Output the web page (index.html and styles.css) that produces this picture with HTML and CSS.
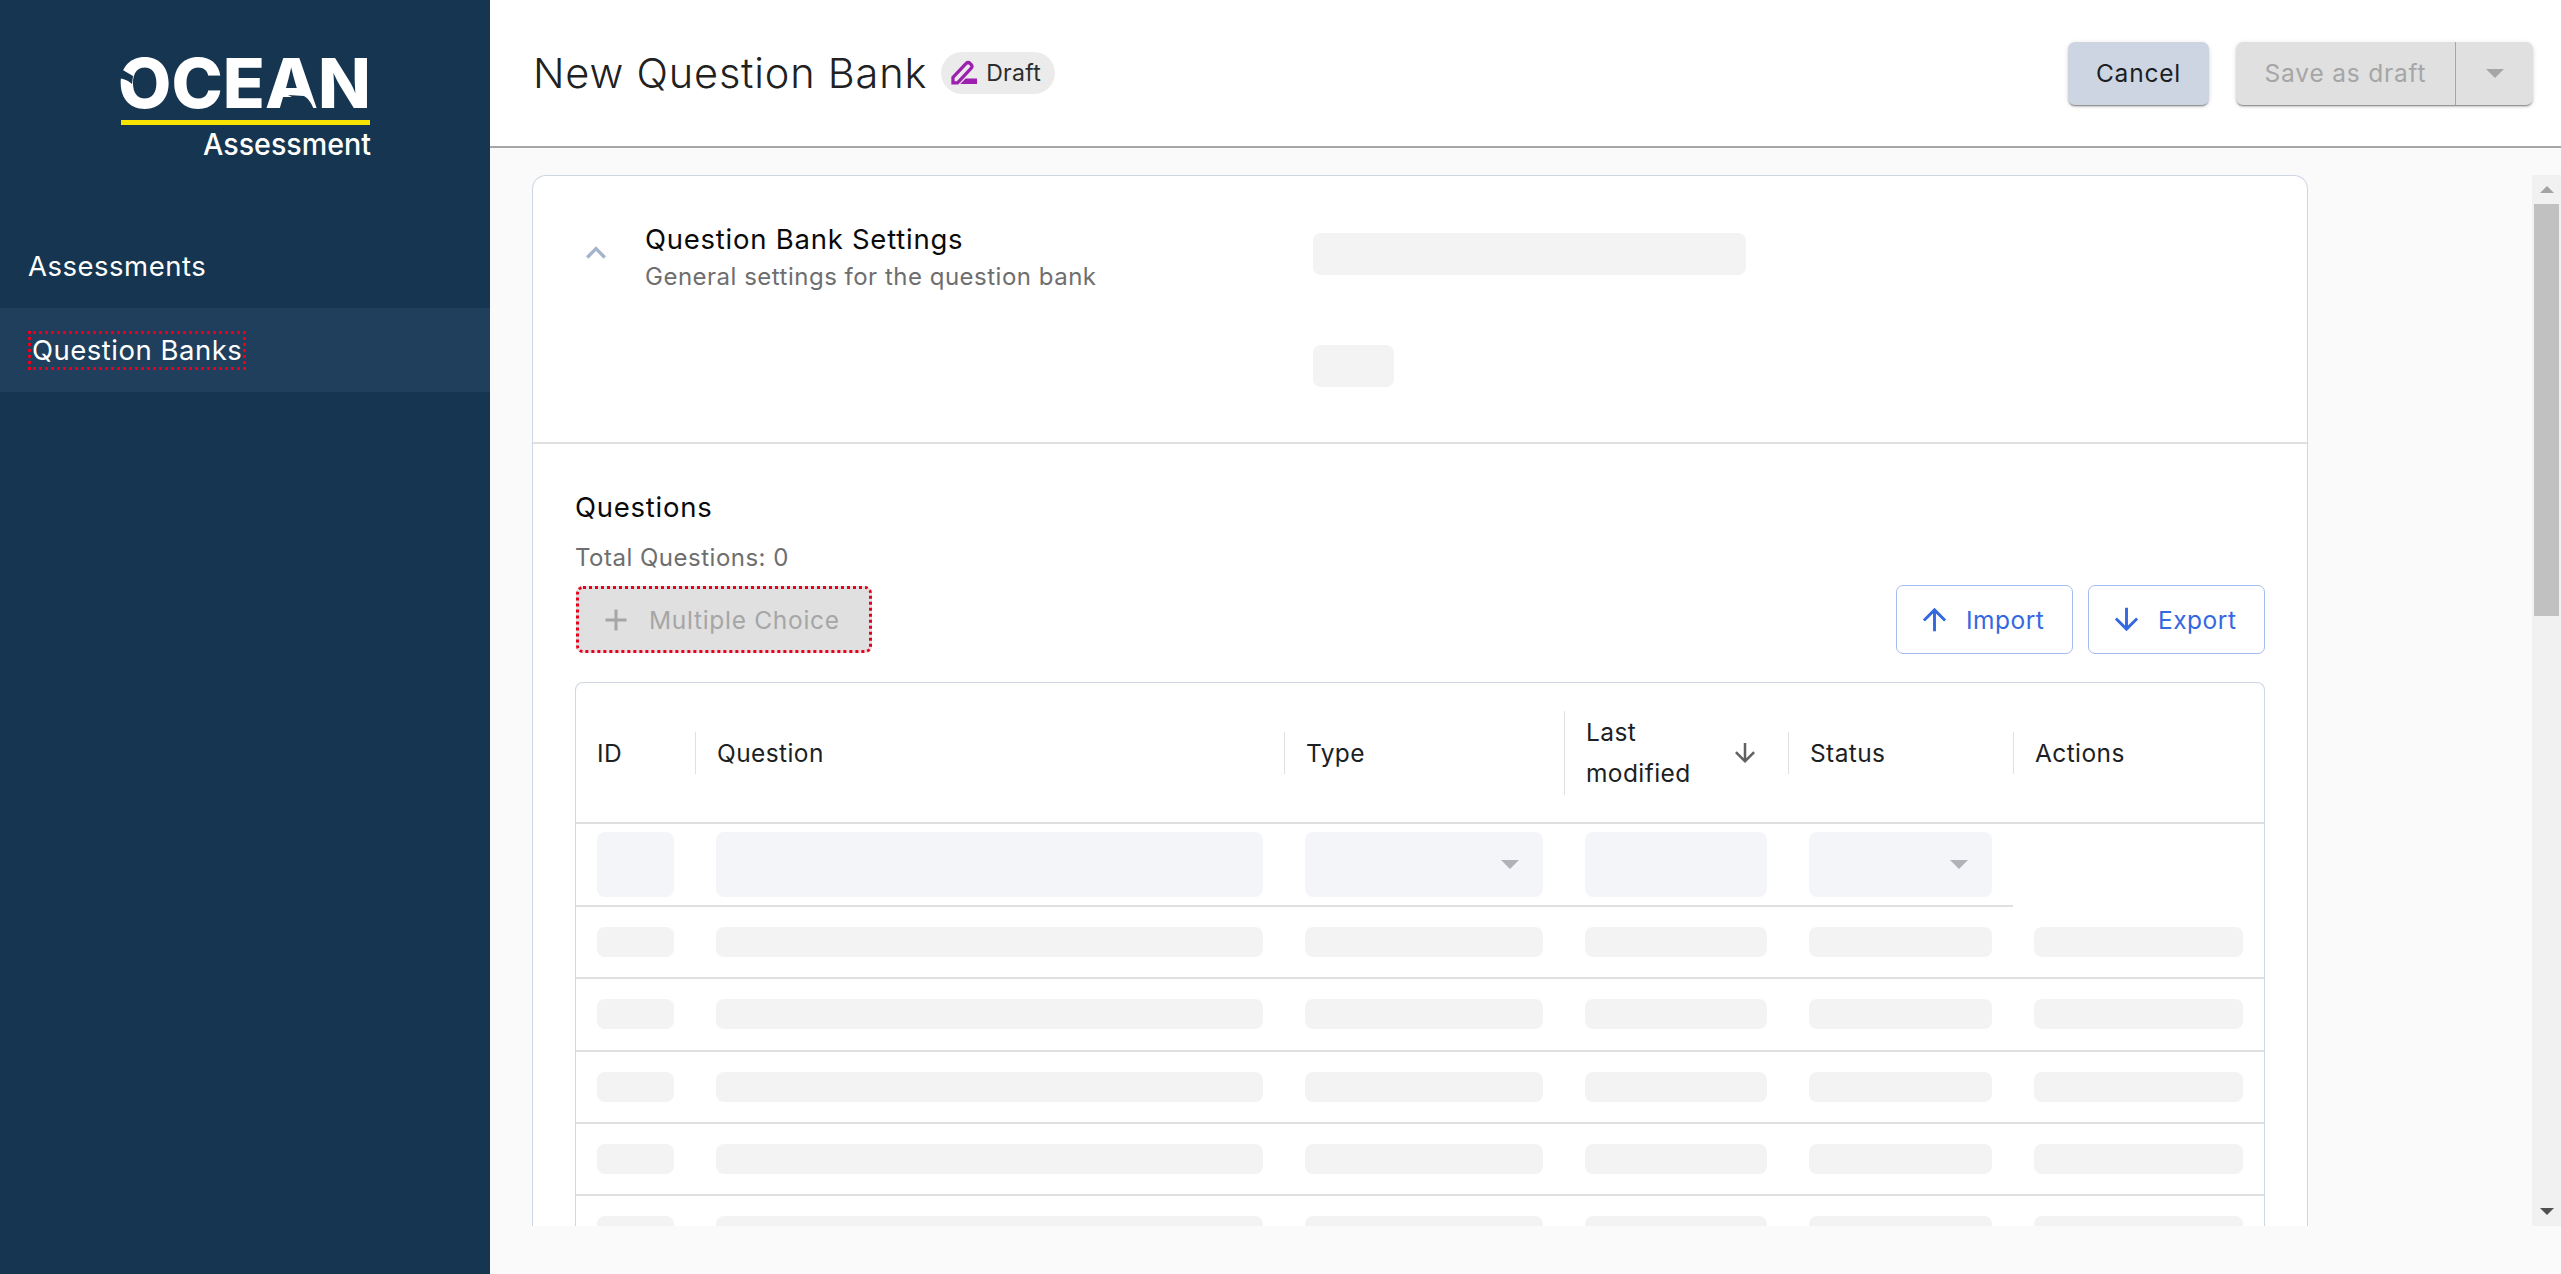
FILE: index.html
```html
<!DOCTYPE html>
<html lang="en">
<head>
  <meta charset="UTF-8">
  <meta name="viewport" content="width=device-width, initial-scale=1.0">
  <title>New Question Bank</title>
  <link rel="stylesheet" href="styles.css">
</head>
<body>
  <nav class="sidebar">
    <svg class="logo" viewBox="0 0 270 110" width="270" height="110">
      <text class="logo-word" x="0" y="56" textLength="253" lengthAdjust="spacingAndGlyphs">OCEAN</text>
      <path class="logo-cut" d="M-2 14 L15 24 L14 32 C10 28 5 27 -2 25 Z"/>
      <path class="logo-cut" d="M170 43 L186 44 C191 47 194 52 196 58 L184 58 L176 46 Z"/>
      <rect class="logo-bar" x="3" y="68" width="249" height="5"/>
      <text class="logo-sub" x="85" y="103" textLength="168" lengthAdjust="spacingAndGlyphs">Assessment</text>
    </svg>
    <a class="nav-item">Assessments</a>
    <a class="nav-item active"><span class="focus">Question Banks</span></a>
  </nav>

  <main class="main">
    <header class="topbar">
      <h1>New Question Bank</h1>
      <span class="chip">
        <svg viewBox="0 0 24 24" width="26" height="26">
          <path class="pen" d="M1.8 21 V16 L14 3.2 a2.6 2.6 0 0 1 3.6 0 l.9.9 a2.6 2.6 0 0 1 0 3.6 L6 21 Z"/>
          <path class="pen-base" d="M13.5 17 H25 V22.2 H8.5 Z"/>
        </svg>
        Draft
      </span>
      <div class="top-actions">
        <button class="btn btn-cancel">Cancel</button>
        <div class="split">
          <span class="split-main">Save as draft</span>
          <span class="split-arrow"><i class="caret"></i></span>
        </div>
      </div>
    </header>

    <div class="pane">
      <div class="scroller">
        <section class="card">
          <div class="settings">
            <svg class="chevron" viewBox="0 0 24 24" width="40" height="40"><path d="M12 8l-6 6 1.41 1.41L12 10.83l4.59 4.58L18 14z"/></svg>
            <div class="settings-text">
              <h2>Question Bank Settings</h2>
              <p>General settings for the question bank</p>
            </div>
            <div class="settings-fields">
              <div class="skel skel-name"></div>
              <div class="skel skel-small"></div>
            </div>
          </div>

          <div class="questions">
            <h3>Questions</h3>
            <p class="total">Total Questions: 0</p>
            <div class="toolbar">
              <button class="btn-add">
                <svg viewBox="0 0 24 24" width="36" height="36"><path d="M19 13h-6v6h-2v-6H5v-2h6V5h2v6h6v2z"/></svg>
                Multiple Choice
              </button>
              <div class="toolbar-right">
                <button class="btn-line">
                  <svg viewBox="0 0 24 24" width="35" height="35"><path d="M4 12l1.41 1.41L11 7.83V20h2V7.83l5.58 5.59L20 12l-8-8-8 8z"/></svg>
                  Import
                </button>
                <button class="btn-line">
                  <svg viewBox="0 0 24 24" width="35" height="35"><path d="M20 12l-1.41-1.41L13 16.17V4h-2v12.17l-5.58-5.59L4 12l8 8 8-8z"/></svg>
                  Export
                </button>
              </div>
            </div>

            <div class="table">
              <div class="row head">
                <div class="th"><span class="th-label first">ID</span></div>
                <div class="th"><span class="th-label">Question</span></div>
                <div class="th"><span class="th-label">Type</span></div>
                <div class="th"><span class="th-label tall">Last<br>modified
                  <svg class="sort" viewBox="0 0 24 24" width="30" height="30"><path d="M20 12l-1.41-1.41L13 16.17V4h-2v12.17l-5.58-5.59L4 12l8 8 8-8z"/></svg>
                </span></div>
                <div class="th"><span class="th-label">Status</span></div>
                <div class="th"><span class="th-label">Actions</span></div>
              </div>

              <div class="row filters">
                <div class="cell"><div class="filter"></div></div>
                <div class="cell"><div class="filter"></div></div>
                <div class="cell"><div class="filter"><i class="caret"></i></div></div>
                <div class="cell"><div class="filter"></div></div>
                <div class="cell"><div class="filter"><i class="caret"></i></div></div>
                <div class="cell empty"></div>
              </div>

              <div class="row body-row">
                <div class="cell"><div class="skel"></div></div>
                <div class="cell"><div class="skel"></div></div>
                <div class="cell"><div class="skel"></div></div>
                <div class="cell"><div class="skel"></div></div>
                <div class="cell"><div class="skel"></div></div>
                <div class="cell"><div class="skel"></div></div>
              </div>
              <div class="row body-row">
                <div class="cell"><div class="skel"></div></div>
                <div class="cell"><div class="skel"></div></div>
                <div class="cell"><div class="skel"></div></div>
                <div class="cell"><div class="skel"></div></div>
                <div class="cell"><div class="skel"></div></div>
                <div class="cell"><div class="skel"></div></div>
              </div>
              <div class="row body-row">
                <div class="cell"><div class="skel"></div></div>
                <div class="cell"><div class="skel"></div></div>
                <div class="cell"><div class="skel"></div></div>
                <div class="cell"><div class="skel"></div></div>
                <div class="cell"><div class="skel"></div></div>
                <div class="cell"><div class="skel"></div></div>
              </div>
              <div class="row body-row">
                <div class="cell"><div class="skel"></div></div>
                <div class="cell"><div class="skel"></div></div>
                <div class="cell"><div class="skel"></div></div>
                <div class="cell"><div class="skel"></div></div>
                <div class="cell"><div class="skel"></div></div>
                <div class="cell"><div class="skel"></div></div>
              </div>
              <div class="row body-row">
                <div class="cell"><div class="skel"></div></div>
                <div class="cell"><div class="skel"></div></div>
                <div class="cell"><div class="skel"></div></div>
                <div class="cell"><div class="skel"></div></div>
                <div class="cell"><div class="skel"></div></div>
                <div class="cell"><div class="skel"></div></div>
              </div>
            </div>
          </div>
        </section>
      </div>

      <div class="scrollbar">
        <div class="sb-btn"><i class="sb-up"></i></div>
        <div class="sb-thumb"></div>
        <div class="sb-track"></div>
        <div class="sb-btn"><i class="sb-down"></i></div>
      </div>
    </div>
  </main>
</body>
</html>
```

FILE: styles.css
```css
* {
  box-sizing: border-box;
}
html, body {
  height: 100%;
}
body {
  margin: 0;
  display: flex;
  overflow: hidden;
  background: #fafafa;
  font-family: Inter, "Liberation Sans", sans-serif;
  color: #1c1f24;
}
h1, h2, h3, p {
  margin: 0;
  font-weight: 400;
}
button {
  font-family: inherit;
}

/* sidebar */
.sidebar {
  width: 490px;
  flex: none;
  background: #153550;
  color: #fff;
}
.logo {
  display: block;
  margin: 52px 0 62px 118px;
  overflow: visible;
}
.logo-word {
  font-size: 69px;
  font-weight: 800;
  fill: #fff;
}
.logo-cut {
  fill: #153550;
}
.logo-bar {
  fill: #f7e200;
}
.logo-sub {
  font-size: 30px;
  font-weight: 500;
  fill: #fff;
}
.nav-item {
  display: flex;
  align-items: center;
  height: 84px;
  padding-left: 28px;
  font-size: 27.5px;
  letter-spacing: 0.5px;
}
.nav-item.active {
  background: #1f3f5c;
}
.focus {
  padding: 0 1px;
  border: 3px dotted #e8001c;
  line-height: 33px;
}

/* top bar */
.main {
  flex: 1;
  min-width: 0;
  display: flex;
  flex-direction: column;
}
.topbar {
  height: 148px;
  flex: none;
  display: flex;
  align-items: center;
  padding: 0 28px 0 43px;
  background: #fff;
  border-bottom: 2px solid #a6a6a6;
}
h1 {
  font-size: 41.5px;
  font-weight: 350;
  letter-spacing: 0.8px;
  color: #212121;
}
.chip {
  display: flex;
  align-items: center;
  gap: 9px;
  height: 42px;
  margin-left: 14px;
  padding: 0 14px 0 10px;
  border-radius: 21px;
  background: #ebebeb;
  font-size: 23px;
  letter-spacing: 0.3px;
  color: #2c2c2c;
}
.pen {
  fill: none;
  stroke: #9c1fb0;
  stroke-width: 3;
}
.pen-base {
  fill: #9c1fb0;
}
.top-actions {
  display: flex;
  gap: 27px;
  margin-left: auto;
}
.btn {
  height: 63px;
  border: 0;
  border-radius: 7px;
  font-size: 24.5px;
  letter-spacing: 0.8px;
  box-shadow: 0 2px 1px -1px rgba(0,0,0,.3), 0 2px 2px 0 rgba(0,0,0,.14), 0 1px 5px 0 rgba(0,0,0,.12);
}
.btn-cancel {
  width: 141px;
  background: #cdd5e2;
  color: #1c1f24;
}
.split {
  display: flex;
  width: 297px;
  height: 63px;
  border-radius: 7px;
  background: #e0e0e0;
  color: #a6a6a6;
  font-size: 24.5px;
  letter-spacing: 0.8px;
  box-shadow: 0 2px 1px -1px rgba(0,0,0,.3), 0 2px 2px 0 rgba(0,0,0,.14), 0 1px 5px 0 rgba(0,0,0,.12);
}
.split-main {
  width: 220px;
  display: flex;
  align-items: center;
  justify-content: center;
  border-right: 1px solid #a6a6a6;
}
.split-arrow {
  flex: 1;
  display: flex;
  align-items: center;
  justify-content: center;
}
.caret {
  display: block;
  border-left: 9px solid transparent;
  border-right: 9px solid transparent;
  border-top: 9px solid #a6a6a6;
}

/* content */
.pane {
  flex: 1;
  min-height: 0;
  display: flex;
  margin: 27px 0 48px;
}
.scroller {
  flex: 1;
  min-width: 0;
  overflow: hidden;
  padding: 0 224px 0 42px;
}
.card {
  background: #fff;
  border: 1px solid #cfd6e4;
  border-radius: 14px 14px 0 0;
  border-bottom: 0;
  min-height: 100%;
}
.settings {
  display: flex;
  align-items: flex-start;
  height: 268px;
  padding: 44px 42px 0 43px;
  border-bottom: 2px solid #e0e0e0;
}
.chevron {
  flex: none;
  margin-top: 13px;
  fill: #a5b4cc;
}
.settings-text {
  width: 697px;
  flex: none;
  padding-left: 29px;
}
h2, h3 {
  font-size: 27.5px;
  font-weight: 400;
  letter-spacing: 0.75px;
  line-height: 38px;
  color: #0a0a0a;
}
.settings-text p, .total {
  font-size: 24px;
  letter-spacing: 0.5px;
  line-height: 38px;
  color: #6e6e6e;
}
.settings-fields {
  padding-top: 13px;
}
.skel {
  height: 30px;
  border-radius: 8px;
  background: #f3f3f3;
}
.skel-name {
  width: 433px;
  height: 42px;
}
.skel-small {
  width: 81px;
  height: 42px;
  margin-top: 70px;
}
.questions {
  padding: 44px 42px 0;
}
.total {
  margin-top: 13px;
}
.toolbar {
  display: flex;
  align-items: center;
  justify-content: space-between;
  height: 69px;
  margin-top: 8px;
}
.toolbar-right {
  display: flex;
  gap: 15px;
}
.btn-add {
  display: flex;
  align-items: center;
  gap: 15px;
  width: 296px;
  height: 67px;
  margin-left: 1px;
  padding: 0 0 0 19px;
  border: 3px dotted #e8001c;
  border-radius: 7px;
  background: #e0e0e0;
  color: #a6a6a6;
  font-size: 24.5px;
  letter-spacing: 0.7px;
}
.btn-add svg {
  fill: #a6a6a6;
}
.btn-line {
  display: flex;
  align-items: center;
  gap: 14px;
  width: 177px;
  height: 69px;
  padding: 0 0 0 20px;
  border: 1px solid #a3bcf2;
  border-radius: 7px;
  background: #fff;
  color: #3568e0;
  font-size: 24.5px;
  letter-spacing: 0.5px;
}
.btn-line svg {
  fill: #3568e0;
}

/* table */
.table {
  margin-top: 28px;
  border: 1px solid #cfd6e4;
  border-bottom: 0;
  border-radius: 8px 8px 0 0;
}
.row {
  display: grid;
  grid-template-columns: 119px 589px 280px 224px 225px 1fr;
}
.head {
  height: 141px;
  border-bottom: 2px solid #e0e0e0;
}
.th {
  display: flex;
  align-items: center;
  font-size: 24.5px;
  letter-spacing: 0.4px;
  color: #1c1f24;
}
.th-label {
  flex: 1;
  position: relative;
  padding-left: 21px;
  line-height: 42px;
  border-left: 1px solid #e0e0e0;
}
.th-label.first {
  border-left: 0;
}
.th-label.tall {
  line-height: 41px;
  height: 84px;
  padding-top: 1px;
}
.sort {
  position: absolute;
  right: 28px;
  top: 27px;
  fill: #616161;
}
.filters {
  height: 83px;
}
.filters .cell {
  height: 83px;
  padding: 8px 21px 0;
  border-bottom: 2px solid #e0e0e0;
}
.filters .cell.empty {
  border-bottom: 0;
}
.filter {
  display: flex;
  align-items: center;
  justify-content: flex-end;
  height: 65px;
  padding-right: 24px;
  border-radius: 8px;
  background: #f4f5f9;
}
.filter .caret {
  border-top-color: #b0b2b8;
}
.body-row {
  height: 72.25px;
  border-bottom: 2px solid #e0e0e0;
}
.body-row .cell {
  display: flex;
  flex-direction: column;
  justify-content: center;
  padding: 0 21px;
}

/* scrollbar */
.scrollbar {
  width: 29px;
  flex: none;
  display: flex;
  flex-direction: column;
  background: #f1f1f1;
}
.sb-btn {
  height: 29px;
  flex: none;
  display: flex;
  align-items: center;
  justify-content: center;
}
.sb-up {
  border-left: 7px solid transparent;
  border-right: 7px solid transparent;
  border-bottom: 7px solid #a3a3a3;
}
.sb-down {
  border-left: 7px solid transparent;
  border-right: 7px solid transparent;
  border-top: 7px solid #505050;
}
.sb-thumb {
  height: 412px;
  margin: 0 2px;
  background: #c1c1c1;
}
.sb-track {
  flex: 1;
}
```
